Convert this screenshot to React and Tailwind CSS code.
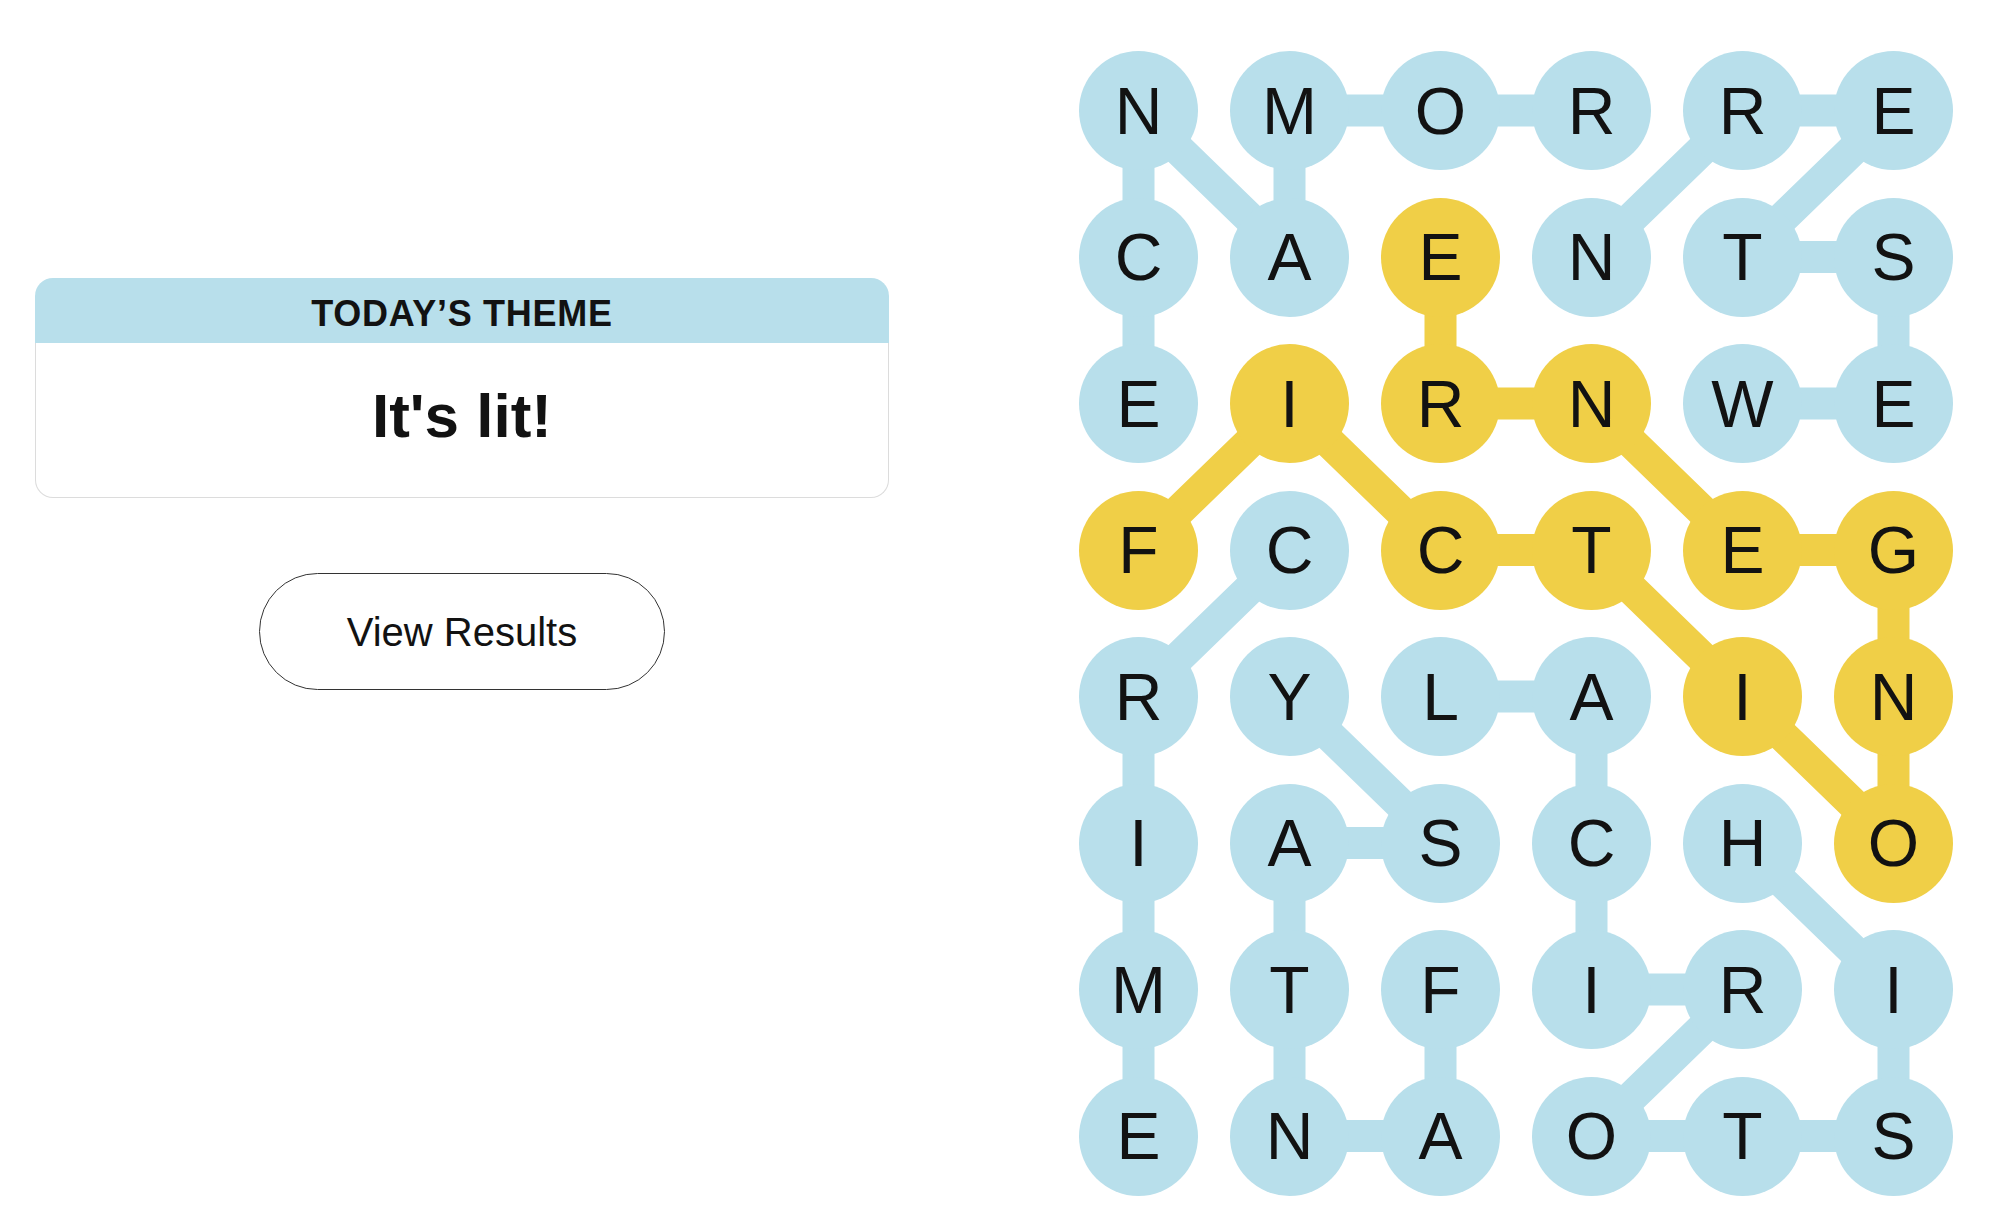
import React from 'react'

const LETTERS = ['NMORRE', 'CAENTS', 'EIRNWE', 'FCCTEG', 'RYLAIN', 'IASCHO', 'MTFIRI', 'ENAOTS']

// found theme words, as [row, col] paths
const WORDS = [
  [[0, 3], [0, 2], [0, 1], [1, 1], [0, 0], [1, 0], [2, 0]], // ROMANCE
  [[2, 4], [2, 5], [1, 5], [1, 4], [0, 5], [0, 4], [1, 3]], // WESTERN
  [[3, 1], [4, 0], [5, 0], [6, 0], [7, 0]], // CRIME
  [[6, 2], [7, 2], [7, 1], [6, 1], [5, 1], [5, 2], [4, 1]], // FANTASY
  [[5, 4], [6, 5], [7, 5], [7, 4], [7, 3], [6, 4], [6, 3], [5, 3], [4, 3], [4, 2]], // HISTORICAL
]
const SPANGRAM = [[3, 0], [2, 1], [3, 2], [3, 3], [4, 4], [5, 5], [4, 5], [3, 5], [3, 4], [2, 3], [2, 2], [1, 2]]

const BLUE = '#b8dfeb'
const YELLOW = '#f0cf47'
const SIZE = 119
const STEP_X = 151
const STEP_Y = 146.5

const isSpangram = (r, c) => SPANGRAM.some(([a, b]) => a === r && b === c)

function Path({ cells, color }) {
  const pts = cells.map(([r, c]) => `${SIZE / 2 + c * STEP_X},${SIZE / 2 + r * STEP_Y}`).join(' ')
  return <polyline points={pts} fill="none" stroke={color} strokeWidth="32" strokeLinejoin="round" />
}

function Board() {
  return (
    <div className="relative">
      <svg className="absolute inset-0" width="874" height="1145">
        {WORDS.map((w, i) => <Path key={i} cells={w} color={BLUE} />)}
        <Path cells={SPANGRAM} color={YELLOW} />
      </svg>
      <div className="grid grid-cols-[repeat(6,119px)] auto-rows-[119px] gap-x-[32px] gap-y-[27.5px]">
        {LETTERS.map((row, r) =>
          row.split('').map((ch, c) => (
            <button
              key={`${r}-${c}`}
              className={`relative flex items-center justify-center rounded-full text-[66px] leading-none text-[#121212] ${
                isSpangram(r, c) ? 'bg-[#f0cf47]' : 'bg-[#b8dfeb]'
              }`}
            >
              {ch}
            </button>
          ))
        )}
      </div>
    </div>
  )
}

export default function App() {
  return (
    <div className="flex items-start bg-white min-h-[1230px] font-['Liberation_Sans',Arial,sans-serif] text-[#121212]">
      {/* theme card + results */}
      <div className="ml-[35px] mt-[278px] flex w-[854px] flex-col items-center">
        <div className="w-full">
          <div className="h-[65px] rounded-t-[18px] bg-[#b8dfeb] pt-[18px] text-center text-[36px] font-bold leading-none tracking-[0.02em]">
            TODAY’S THEME
          </div>
          <div className="rounded-b-[18px] border border-t-0 border-[#dcdcdc] pt-[42px] pb-[50px] text-center text-[62px] font-bold leading-none">
            It's lit!
          </div>
        </div>
        <button className="mt-[75px] h-[117px] w-[406px] rounded-full border-[1.5px] border-[#333] text-[40px] leading-none">
          View Results
        </button>
      </div>

      {/* letter board */}
      <div className="ml-[190px] mt-[51px]">
        <Board />
      </div>
    </div>
  )
}
